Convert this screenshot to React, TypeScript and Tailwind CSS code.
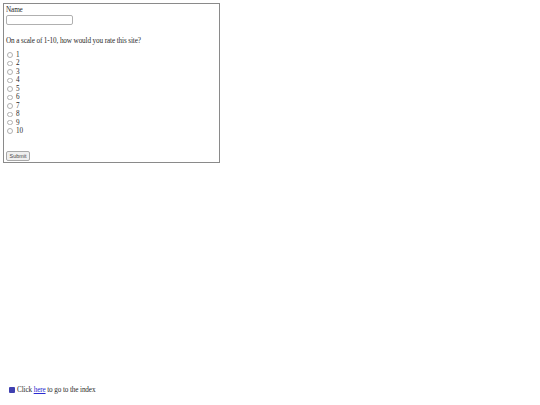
import React from "react";

export default function App() {
  const nums = [1, 2, 3, 4, 5, 6, 7, 8, 9, 10];
  return (
    <div className="w-[540px] h-[405px] bg-white text-[#2a2a2a] antialiased font-['Liberation_Serif',serif] text-[7.2px] tracking-[-0.12px] leading-[8.4px] flex flex-col overflow-hidden">
      <div className="ml-[3px] mt-[3px] w-[217px] h-[160px] border border-[#8a8a8a] pl-[2px] pt-[3px] flex flex-col">
        <div className="h-[7px] leading-[7px]">Name</div>
        <div className="mt-[1px] w-[67px] h-[10px] border border-[#b0b0b0] rounded-[2px] bg-white"></div>
        <div className="mt-[12px] h-[8px] leading-[8px]">On a scale of 1-10, how would you rate this site?</div>
        <div className="mt-[6px] flex flex-col">
          {nums.map((n) => (
            <div key={n} className="h-[8.45px] flex items-center">
              <span className="ml-[1px] w-[5.5px] h-[5.5px] rounded-full border border-[#b0b0b0] bg-white"></span>
              <span className="ml-[3.5px]">{n}</span>
            </div>
          ))}
        </div>
        <div className="mt-[16px]">
          <div className="w-[24px] h-[10px] border border-[#a8a8a8] rounded-[2px] bg-[#efefef] flex items-center justify-center font-['Liberation_Sans',sans-serif] text-[5.4px] tracking-normal leading-[6px] text-[#444]">
            Submit
          </div>
        </div>
      </div>
      <div className="ml-[9px] mt-[223px] flex items-center h-[8px]">
        <span className="w-[6px] h-[6px] bg-[#4040b0] rounded-[1px]"></span>
        <span className="ml-[2px]">
          Click <span className="text-[#2a2ad0] underline">here</span> to go to the index
        </span>
      </div>
    </div>
  );
}
